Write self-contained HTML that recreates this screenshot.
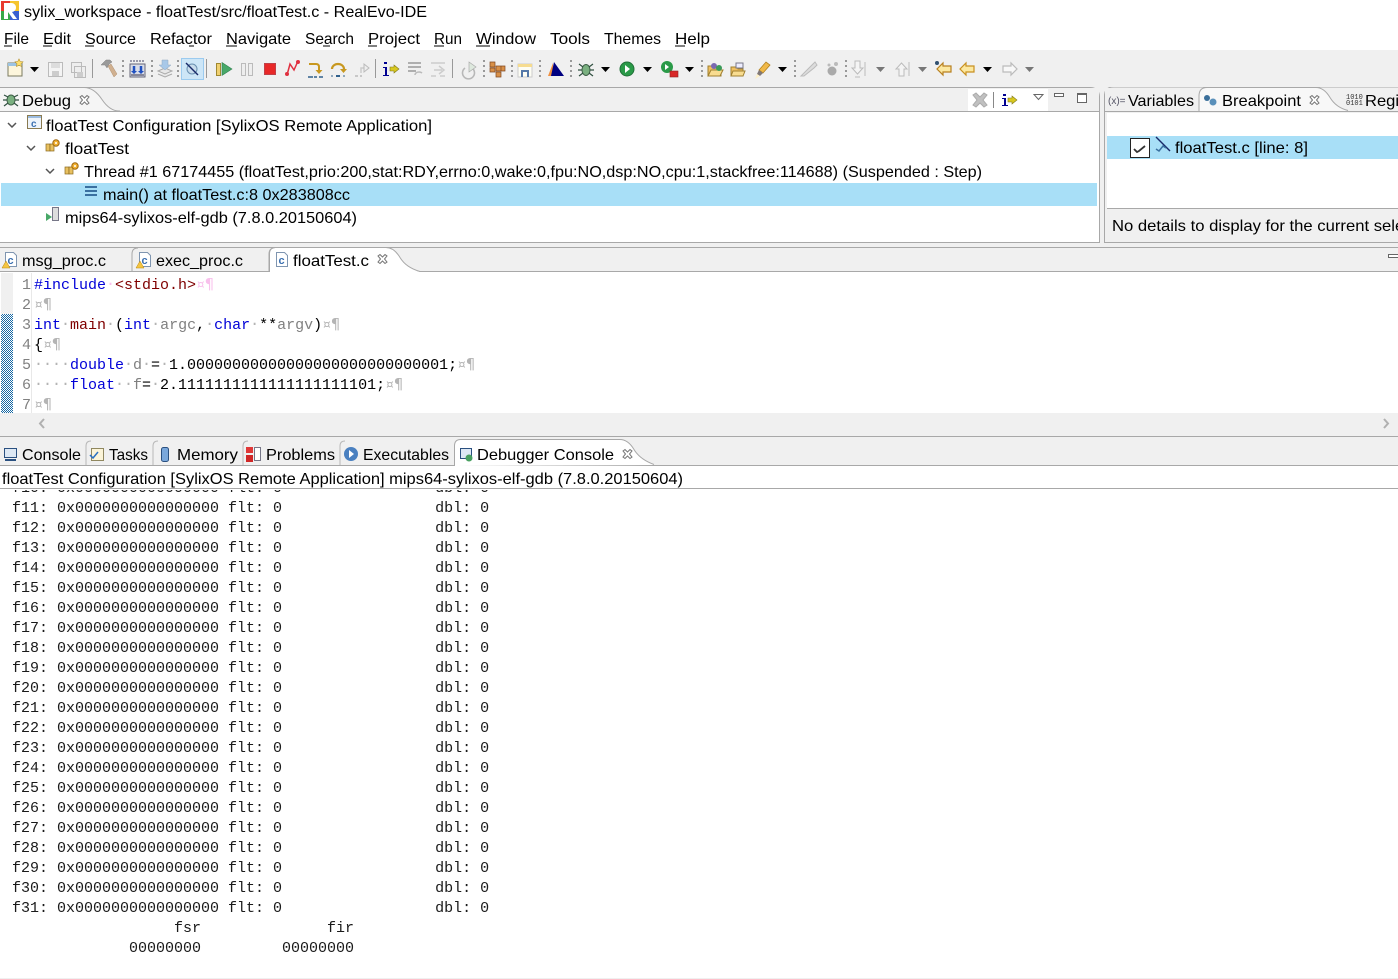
<!DOCTYPE html>
<html lang="en"><head><meta charset="utf-8"><title>sylix_workspace - floatTest/src/floatTest.c - RealEvo-IDE</title>
<style>
html,body{margin:0;padding:0;background:#fff;width:1398px;height:979px;overflow:hidden}
svg{display:block}
text{font-family:"Liberation Sans",sans-serif;font-size:16px;fill:#000;white-space:pre}
.m,.m tspan{font-family:"Liberation Mono",monospace;font-size:15px}
.m tspan.g,.m tspan.p{font-family:"DejaVu Sans Mono","Liberation Mono",monospace;font-size:14.950px}
.g{fill:#b4b4b4}.b{fill:#0000d8}.r{fill:#7f0000}.k{fill:#000}.y{fill:#808080}.p{fill:#f8c0ec}
.d{fill:#1a1a1a}
</style></head><body>
<svg xmlns="http://www.w3.org/2000/svg" width="1398" height="979" viewBox="0 0 1398 979">
<defs>
<clipPath id="cons"><rect x="0" y="490" width="1398" height="488"/></clipPath>
<clipPath id="rp"><rect x="1104" y="87" width="294" height="160"/></clipPath>
<pattern id="dots" width="2" height="2" patternUnits="userSpaceOnUse"><rect width="2" height="2" fill="#fff"/><rect width="1" height="1" fill="#1668a4"/><rect x="1" y="1" width="1" height="1" fill="#1668a4"/></pattern>
<g id="grip"><rect x="0" y="0" width="2" height="2" fill="#999"/><rect x="0" y="5" width="2" height="2" fill="#999"/><rect x="0" y="10" width="2" height="2" fill="#999"/><rect x="0" y="15" width="2" height="2" fill="#999"/></g>
<path id="dd" d="M0 0h9l-4.500 5z" fill="#000"/>
<path id="ddg" d="M0 0h9l-4.500 5z" fill="#777"/>
<path id="chev" d="M0 0l4 4 4-4" fill="none" stroke="#555" stroke-width="1.500"/>
<path id="x" d="M1 2l2-1.500 2.500 2.500 2.500-2.500 2 1.500-2.500 3 2.500 3-2 1.500-2.500-2.500-2.500 2.500-2-1.500 2.500-3z" fill="#fff" stroke="#777"/>
<g id="cfile"><path d="M1.500 .5h8l3 3v11h-11z" fill="#fff" stroke="#7f95b0"/><text x="3.500" y="12" style="font-size:11px;font-weight:bold;fill:#3a6fb0">c</text></g>
<g id="warn"><path d="M0 15l4-7 4 7z" fill="#f5c542" stroke="#b8860b" stroke-width=".5"/></g>
<g id="gear"><rect x="0" y="5" width="4" height="7" fill="#e8c060" stroke="#8a6a20" stroke-width=".7"/><rect x="4" y="5" width="4" height="7" fill="#e8c060" stroke="#8a6a20" stroke-width=".7"/><circle cx="10" cy="4" r="3.200" fill="#f0b030" stroke="#a06810"/><circle cx="10" cy="4" r="1" fill="#fff"/></g>
</defs>

<!-- chrome -->
<rect width="1398" height="979" fill="#fff"/>
<rect x="0" y="50" width="1398" height="397" fill="#f0f0f0"/>

<!-- title bar -->
<rect x="1" y="1" width="9" height="10" fill="#e8392e"/><rect x="10" y="1" width="9" height="10" fill="#f5c52e"/><rect x="1" y="11" width="9" height="9" fill="#38a848"/><rect x="10" y="11" width="9" height="9" fill="#3a5fd0"/>
<path d="M4 19V3h7a4.500 4.500 0 0 1 1 9l5 7h-4l-5-7v7z" fill="#fff"/>
<text x="24" y="17" textLength="403" lengthAdjust="spacingAndGlyphs">sylix_workspace - floatTest/src/floatTest.c - RealEvo-IDE</text>

<!-- menu -->
<g>
<text x="4" y="44" textLength="25" lengthAdjust="spacingAndGlyphs">File</text>
<text x="43" y="44" textLength="28" lengthAdjust="spacingAndGlyphs">Edit</text>
<text x="85" y="44" textLength="51" lengthAdjust="spacingAndGlyphs">Source</text>
<text x="150" y="44" textLength="62" lengthAdjust="spacingAndGlyphs">Refactor</text>
<text x="226" y="44" textLength="65" lengthAdjust="spacingAndGlyphs">Navigate</text>
<text x="305" y="44" textLength="49" lengthAdjust="spacingAndGlyphs">Search</text>
<text x="368" y="44" textLength="52" lengthAdjust="spacingAndGlyphs">Project</text>
<text x="434" y="44" textLength="28" lengthAdjust="spacingAndGlyphs">Run</text>
<text x="476" y="44" textLength="60" lengthAdjust="spacingAndGlyphs">Window</text>
<text x="550" y="44" textLength="40" lengthAdjust="spacingAndGlyphs">Tools</text>
<text x="604" y="44" textLength="57" lengthAdjust="spacingAndGlyphs">Themes</text>
<text x="675" y="44" textLength="35" lengthAdjust="spacingAndGlyphs">Help</text>
<path d="M4 46h8M43 46h9M85 46h9M189 46h5M226 46h11M323 46h7M368 46h9M434 46h10M476 46h14M675 46h10" stroke="#000" stroke-width="1"/>
</g>

<!-- toolbar -->
<g>
<rect x="8" y="63" width="14" height="13" fill="#fdf6dc" stroke="#7a7a60"/><rect x="8" y="63" width="14" height="3" fill="#9cc4e4"/><path d="M19 59l1.200 2.500 2.800.3-2 2 .5 2.700-2.500-1.300-2.500 1.300.5-2.700-2-2 2.800-.3z" fill="#fde070" stroke="#b89020" stroke-width=".6"/>
<use href="#dd" x="30" y="67"/>
<path d="M48.500 62.500h14v14h-14z" fill="#f4f4f4" stroke="#bbb"/><rect x="51" y="63" width="9" height="5" fill="#ddd"/><rect x="52" y="71" width="7" height="5" fill="#ccc"/>
<path d="M71.500 62.500h10v10h-10zM74.500 66.500h11v11h-11z" fill="#eee" stroke="#bbb"/><rect x="77" y="72" width="6" height="5" fill="#ccc"/>
<rect x="92" y="59" width="1" height="19" fill="#999"/>
<path d="M101 65l5-5h4l2 2-3 2-2 4-2-3z" fill="#9a9a9a" stroke="#808080" stroke-width=".5"/><path d="M108 66l3-2 6 10-3 3z" fill="#d0b090" stroke="#b09070" stroke-width=".5"/>
<use href="#grip" x="122" y="60"/>
<rect x="130" y="64" width="15" height="13" fill="#d8dce8" stroke="#667"/><path d="M130 61h15" stroke="#99a" stroke-dasharray="2 1" stroke-width="2"/><path d="M134 66v5M141 66v5" stroke="#2050c0" stroke-width="2.500"/><path d="M131 71h6l-3 3zM138 71h6l-3 3z" fill="#2050c0"/><rect x="131" y="74" width="13" height="2" fill="#889"/>
<use href="#grip" x="151" y="60"/>
<path d="M158 71l7-3 7 3-7 3zM158 74l7 3 7-3" fill="#e8e8e8" stroke="#aaa"/><path d="M162 60h6v5h3l-6 5-6-5h3z" fill="#a8c8e8" stroke="#90a8c0" stroke-width=".5"/>
<use href="#grip" x="177" y="60"/>
<rect x="181.500" y="58.500" width="22" height="21" fill="#cde6f7" stroke="#9ccbef"/>
<ellipse cx="192" cy="69" rx="5" ry="5" fill="#c8dcec" stroke="#6a90b0"/><path d="M186 63l12 12" stroke="#182868" stroke-width="1.400"/>
<rect x="206" y="59" width="1" height="19" fill="#999"/>
<rect x="216.500" y="63.500" width="4" height="12" fill="#f0d070" stroke="#a08830"/><path d="M222 62.500l10 6.500-10 6.500z" fill="#48a868" stroke="#308050" stroke-width=".6"/>
<rect x="241.500" y="63.500" width="4" height="12" fill="#eee" stroke="#bbb"/><rect x="248.500" y="63.500" width="4" height="12" fill="#eee" stroke="#bbb"/>
<rect x="264.500" y="63.500" width="11" height="11" fill="#e82828" stroke="#c04048"/>
<path d="M287 75l3-11 4 6 4-9" fill="none" stroke="#e03040" stroke-width="1.500"/><circle cx="287" cy="74" r="2" fill="#e03040"/><circle cx="298" cy="62" r="2" fill="#e03040"/>
<path d="M309 64h7q3 0 3 3v3" fill="none" stroke="#c89820" stroke-width="2"/><path d="M315.500 70h7l-3.500 4z" fill="#c89820"/><path d="M308 77h5M314 77h3M319 77h4" stroke="#30608c" stroke-width="1.500"/>
<path d="M332 69a6 5 0 0 1 12 0" fill="none" stroke="#c89820" stroke-width="2.200"/><path d="M340 69h7l-3.500 4z" fill="#c89820"/><path d="M336 76h4" stroke="#30608c" stroke-width="2"/><path d="M331 76h2M343 76h2" stroke="#30608c" stroke-width="1"/>
<path d="M361 73v-5h4" fill="none" stroke="#ccc" stroke-width="1.500"/><path d="M364 64l5 4-5 4z" fill="#eee" stroke="#bbb"/><path d="M355 76h3M360 76h2" stroke="#bbb" stroke-width="1.500"/>
<rect x="375" y="59" width="1" height="19" fill="#999"/>
<path d="M384 62h3v2h-3zM383 67h4v8h2v1h-6v-1h2v-7h-2z" fill="#000090"/><path d="M390 67h4v-2l5 4-5 4v-2h-4z" fill="#d8c820" stroke="#807818" stroke-width=".6"/>
<path d="M408 63h13M408 67h13M408 71h8" stroke="#999" stroke-width="1.600"/><path d="M415 75a4 3 0 0 1 7-2" fill="none" stroke="#bbb" stroke-width="1.500"/>
<path d="M431 63h14M431 76h5M440 76h5" stroke="#ccc" stroke-width="1.500"/><path d="M434 70h8m-3-4l5 4-5 4" fill="none" stroke="#ccc" stroke-width="1.500"/>
<rect x="452" y="59" width="1" height="19" fill="#999"/>
<path d="M465 68a6 6 0 1 0 7 0" fill="none" stroke="#b8b8b8" stroke-width="1.600"/><path d="M469 62l7 5-7 5z" fill="#dde8dd" stroke="#aaa" stroke-width=".7"/>
<use href="#grip" x="483" y="60"/>
<path d="M490 62h5v5h-5zM496 66h5v5h-5zM496 72h5v5h-5zM501 66h4v5h-4zM490 68h5v4h-5z" fill="#d89048" stroke="#804820" stroke-width=".7"/>
<use href="#grip" x="511" y="60"/>
<rect x="518" y="64" width="14" height="13" fill="#fdfdf4" stroke="#ccc"/><rect x="518" y="64" width="14" height="3" fill="#f6dc90"/><path d="M522 77v-6h6v6" fill="none" stroke="#5578a8" stroke-width="2"/>
<use href="#grip" x="539" y="60"/>
<path d="M548 76l5-13v13z" fill="#f09040"/><path d="M554 62l-3 14h13z" fill="#000080"/>
<use href="#grip" x="570" y="60"/>
<ellipse cx="586" cy="70" rx="4" ry="5.500" fill="#7ab080" stroke="#406048"/><path d="M579 64l4 3M593 64l-4 3M578 70h4M594 70h-4M579 76l4-3M593 76l-4-3" stroke="#305040" stroke-width="1.200"/>
<use href="#dd" x="601" y="67"/>
<circle cx="627" cy="69" r="7" fill="#2a9a48" stroke="#207038"/><path d="M625 65l5 4-5 4z" fill="#fff"/>
<use href="#dd" x="643" y="67"/>
<circle cx="667" cy="67" r="6" fill="#2a9a48"/><path d="M665 64l4 3-4 3z" fill="#fff"/><rect x="670" y="71" width="8" height="6" fill="#d82828" stroke="#902020" stroke-width=".6"/>
<use href="#dd" x="685" y="67"/>
<use href="#grip" x="701" y="60"/>
<path d="M708 66h6l1 2h6v8h-13z" fill="#f0c060" stroke="#a08030"/><path d="M708 76l3-6h12l-3 6z" fill="#f8dc90" stroke="#a08030"/><circle cx="714" cy="66" r="3" fill="#7a68b0"/><circle cx="719" cy="68" r="3" fill="#3a9a58"/>
<path d="M731 67h6l1 2h5v7h-12z" fill="#f0c060" stroke="#a08030"/><path d="M731 76l2-5h12l-2 5z" fill="#f8dc90" stroke="#a08030"/><rect x="736" y="63" width="7" height="5" fill="#eef" stroke="#778"/>
<path d="M759 70l7-8 4 3-7 8z" fill="#f0b848" stroke="#b08020" stroke-width=".8"/><path d="M759 70l4 3-3 3-3-2z" fill="#807878"/><path d="M757 74l3 2-5 3z" fill="#fdf0c8"/>
<use href="#dd" x="778" y="67"/>
<use href="#grip" x="794" y="60"/>
<path d="M801 76l11-11 3-3 2 3-3 3-10 8z" fill="#ddd" stroke="#bbb"/>
<circle cx="832" cy="71" r="4.500" fill="#aaa"/><circle cx="836" cy="64" r="2" fill="#bbb"/><circle cx="829" cy="65" r="1.500" fill="#bbb"/>
<use href="#grip" x="845" y="60"/>
<path d="M855 61h5v7h3l-5.500 6-5.500-6h3zM865 62v14" fill="#f4f4f4" stroke="#bbb"/><path d="M855 77h5" stroke="#bbb"/>
<use href="#ddg" x="876" y="67"/>
<path d="M899 76h5v-7h3l-5.500-6-5.500 6h3zM909 62v14" fill="#f4f4f4" stroke="#bbb"/>
<use href="#ddg" x="918" y="67"/>
<path d="M951 66h-8v-3l-6 6 6 6v-3h8z" fill="#fce8a0" stroke="#b88020" stroke-width="1.200"/><circle cx="937" cy="63" r="2" fill="#305070"/>
<path d="M974 66h-8v-3l-6 6 6 6v-3h8z" fill="#fce8a0" stroke="#c89020" stroke-width="1.200"/>
<use href="#dd" x="983" y="67"/>
<path d="M1003 66h8v-3l6 6-6 6v-3h-8z" fill="#f8f8f8" stroke="#bbb" stroke-width="1.200"/>
<use href="#ddg" x="1025" y="67"/>
</g>

<!-- Debug panel -->
<path d="M0 87.500H1090q9 0 9.500 9V242.500H0" fill="none" stroke="#a8a8a8"/>
<rect x="0" y="88" width="1099" height="23" fill="#f0f0f0"/>
<path d="M0 88H84q10 0 18 12t18 11H0z" fill="#f5f5f5"/><path d="M0 87.500H84q10 0 18 12t18 11.500" fill="none" stroke="#a8a8a8"/>
<rect x="0" y="111" width="1099" height="1" fill="#a8a8a8"/>
<rect x="0" y="112" width="1099" height="130" fill="#fff"/>
<rect x="968" y="89" width="80" height="22" fill="#fff"/>
<ellipse cx="11" cy="100" rx="4" ry="5" fill="#7ab080" stroke="#406048"/><path d="M4 95l4 2M18 95l-4 2M3 100h4M19 100h-4M4 106l4-3M18 106l-4-3" stroke="#305040" stroke-width="1.200"/>
<text x="22" y="106" textLength="49" lengthAdjust="spacingAndGlyphs">Debug</text>
<use href="#x" x="79" y="95"/>
<path d="M973 95l3-2 4 4 4-4 3 2-4 5 4 5-3 2-4-4-4 4-3-2 4-5z" fill="#c0c0c0" stroke="#aaa"/>
<rect x="993" y="92" width="1" height="16" fill="#888"/>
<path d="M1003 94h3v2h-3zM1002 98h4v7h2v1h-6v-1h2v-6h-2z" fill="#000090"/><path d="M1008 98h4v-2l5 4-5 4v-2h-4z" fill="#d8c820" stroke="#807818" stroke-width=".6"/>
<path d="M1034 94.500h9l-4.500 5z" fill="#fff" stroke="#666"/>
<rect x="1054.500" y="93.500" width="9" height="3" fill="#fff" stroke="#666"/>
<rect x="1077.500" y="93.500" width="9" height="9" fill="#fff" stroke="#666"/><rect x="1077" y="93" width="10" height="2" fill="#666"/>

<!-- tree -->
<rect x="1" y="183" width="1096" height="23" fill="#a8dff7"/>
<use href="#chev" x="8" y="123"/>
<use href="#chev" x="27" y="146"/>
<use href="#chev" x="46" y="169"/>
<rect x="27.500" y="115.500" width="14" height="13" fill="#eef4fb" stroke="#8a7a50"/><rect x="28" y="116" width="13" height="2" fill="#9cbce0"/><text x="31" y="127" style="font-size:10px;font-weight:bold;fill:#3a6fb0">c</text>
<text x="46" y="131" textLength="386" lengthAdjust="spacingAndGlyphs">floatTest Configuration [SylixOS Remote Application]</text>
<use href="#gear" x="46" y="139"/>
<text x="65" y="154" textLength="64" lengthAdjust="spacingAndGlyphs">floatTest</text>
<use href="#gear" x="65" y="162"/>
<text x="84" y="177" textLength="898" lengthAdjust="spacingAndGlyphs">Thread #1 67174455 (floatTest,prio:200,stat:RDY,errno:0,wake:0,fpu:NO,dsp:NO,cpu:1,stackfree:114688) (Suspended : Step)</text>
<path d="M85 186h12v2H85zM85 190h12v2H85zM85 194h12v2H85z" fill="#3a70a0"/>
<text x="103" y="200" textLength="247" lengthAdjust="spacingAndGlyphs">main() at floatTest.c:8 0x283808cc</text>
<rect x="52.500" y="207.500" width="6" height="13" fill="#ddd" stroke="#778"/><path d="M46 213l6 4-6 4z" fill="#48a868"/>
<text x="65" y="223" textLength="292" lengthAdjust="spacingAndGlyphs">mips64-sylixos-elf-gdb (7.8.0.20150604)</text>

<!-- Right panel -->
<g clip-path="url(#rp)">
<path d="M1104.500 242.500V96q0-9 9-9H1400" fill="#f0f0f0" stroke="#a8a8a8"/>
<rect x="1105" y="88" width="293" height="23" fill="#f0f0f0"/>
<rect x="1104" y="111" width="294" height="1" fill="#a8a8a8"/>
<path d="M1199 111V96q0-8 8-8H1316q8 0 14 10t18 13z" fill="#f8f8f8"/>
<path d="M1199 111V96q0-8.500 8-8.500H1316q8 0 14 10t18 13" fill="none" stroke="#a8a8a8"/>
<rect x="1105" y="113" width="2" height="129" fill="#f0f0f0"/>
<rect x="1107" y="113" width="291" height="95" fill="#fff"/>
<rect x="1107" y="136" width="291" height="23" fill="#a8dff7"/>
<rect x="1130.500" y="138.500" width="19" height="19" fill="#fff" stroke="#222"/>
<path d="M1134 149l3 3 2-1 6-5" fill="none" stroke="#333" stroke-width="1.800"/>
<path d="M1156 137l14 14" stroke="#182868" stroke-width="1.400"/><path d="M1156 149l3 2 4-5 3 2" fill="none" stroke="#3a70a0" stroke-width="1.500"/>
<text x="1175" y="153" textLength="133" lengthAdjust="spacingAndGlyphs">floatTest.c [line: 8]</text>
<rect x="1107" y="208" width="291" height="1" fill="#a8a8a8"/>
<rect x="1107" y="209" width="291" height="32" fill="#f0f0f0"/>
<text x="1112" y="231" textLength="332" lengthAdjust="spacingAndGlyphs">No details to display for the current selection.</text>
<text x="1108" y="104" style="font-size:10px;fill:#556">(x)=</text>
<text x="1128" y="106" textLength="66" lengthAdjust="spacingAndGlyphs">Variables</text>
<circle cx="1207" cy="98" r="3" fill="#3a6f9a"/><circle cx="1213" cy="102" r="3.500" fill="#5a90ba"/>
<text x="1222" y="106" textLength="79" lengthAdjust="spacingAndGlyphs">Breakpoint</text>
<use href="#x" x="1309" y="95"/>
<text x="1346" y="99" style="font-size:7px;font-family:'Liberation Mono',monospace;fill:#333">1010</text>
<text x="1346" y="105" style="font-size:7px;font-family:'Liberation Mono',monospace;fill:#333">0101</text>
<text x="1365" y="106" textLength="70" lengthAdjust="spacingAndGlyphs">Registers</text>
</g>

<!-- Editor tabs -->
<rect x="0" y="242" width="1398" height="1" fill="#a8a8a8"/>
<rect x="1100" y="242" width="4" height="1" fill="#f0f0f0"/>
<rect x="0" y="247" width="1398" height="1" fill="#a8a8a8"/>
<rect x="0" y="248" width="1398" height="24" fill="#f0f0f0"/>
<rect x="0" y="271" width="1398" height="1" fill="#a8a8a8"/>
<path d="M132 271v-17q0-6 6-6M269 271v-17q0-6 6-6" fill="none" stroke="#a8a8a8"/>
<path d="M270 272v-18q0-6 6-6H386q8 0 14 10t20 14z" fill="#fff"/>
<path d="M269.500 271v-17q0-6.500 6-6.500H386q8 0 14 10t20 14" fill="none" stroke="#a8a8a8"/>
<use href="#cfile" x="4" y="252"/><use href="#warn" x="2" y="253"/>
<text x="22" y="266" textLength="84" lengthAdjust="spacingAndGlyphs">msg_proc.c</text>
<use href="#cfile" x="138" y="252"/><use href="#warn" x="136" y="253"/>
<text x="156" y="266" textLength="87" lengthAdjust="spacingAndGlyphs">exec_proc.c</text>
<use href="#cfile" x="275" y="252"/>
<text x="293" y="266" textLength="76" lengthAdjust="spacingAndGlyphs">floatTest.c</text>
<use href="#x" x="377" y="254"/>
<rect x="1388.500" y="254.500" width="10" height="3" fill="#fff" stroke="#666"/>

<!-- Editor -->
<rect x="0" y="272" width="1398" height="141" fill="#fff"/>
<rect x="1" y="273" width="12" height="41" fill="#f0f0f0"/>
<rect x="1" y="314" width="12" height="99" fill="url(#dots)"/>
<rect x="31" y="273" width="1" height="140" fill="#e8e8e8"/>
<rect x="0" y="413" width="1398" height="21" fill="#f0f0f0"/>
<path d="M44 419l-4 4.500 4 4.500" fill="none" stroke="#b0b0b0" stroke-width="2"/>
<path d="M1384 419l4 4.500-4 4.500" fill="none" stroke="#b0b0b0" stroke-width="2"/>
<rect x="0" y="436" width="1398" height="1" fill="#a8a8a8"/>
<g class="m">
<text class="m y" x="22" y="289">1</text><text class="m y" x="22" y="309">2</text><text class="m y" x="22" y="329">3</text><text class="m y" x="22" y="349">4</text><text class="m y" x="22" y="369">5</text><text class="m y" x="22" y="389">6</text><text class="m y" x="22" y="409">7</text>
<text class="m" x="34" y="289"><tspan class="b">#include</tspan><tspan class="p">·</tspan><tspan class="r">&lt;stdio.h&gt;</tspan><tspan class="p">¤¶</tspan></text>
<text class="m" x="34" y="309"><tspan class="g">¤¶</tspan></text>
<text class="m" x="34" y="329"><tspan class="b">int</tspan><tspan class="g">·</tspan><tspan class="r">main</tspan><tspan class="g">·</tspan><tspan class="k">(</tspan><tspan class="b">int</tspan><tspan class="g">·</tspan><tspan class="y">argc</tspan><tspan class="k">,</tspan><tspan class="g">·</tspan><tspan class="b">char</tspan><tspan class="g">·</tspan><tspan class="k">**</tspan><tspan class="y">argv</tspan><tspan class="k">)</tspan><tspan class="g">¤¶</tspan></text>
<text class="m" x="34" y="349"><tspan class="k">{</tspan><tspan class="g">¤¶</tspan></text>
<text class="m" x="34" y="369"><tspan class="g">····</tspan><tspan class="b">double</tspan><tspan class="g">·</tspan><tspan class="y">d</tspan><tspan class="g">·</tspan><tspan class="k">=</tspan><tspan class="g">·</tspan><tspan class="k">1.00000000000000000000000000001;</tspan><tspan class="g">¤¶</tspan></text>
<text class="m" x="34" y="389"><tspan class="g">····</tspan><tspan class="b">float</tspan><tspan class="g">··</tspan><tspan class="y">f</tspan><tspan class="k">=</tspan><tspan class="g">·</tspan><tspan class="k">2.1111111111111111111101;</tspan><tspan class="g">¤¶</tspan></text>
<text class="m" x="34" y="409"><tspan class="g">¤¶</tspan></text>
</g>

<!-- Console tabs -->
<rect x="0" y="437" width="1398" height="29" fill="#f0f0f0"/>
<rect x="0" y="465" width="1398" height="1" fill="#a8a8a8"/>
<path d="M86 465v-19q0-5 5-5M153 465v-19q0-5 5-5M243 465v-19q0-5 5-5M340 465v-19q0-5 5-5" fill="none" stroke="#b8b8b8"/>
<path d="M455 466v-20q0-6 6-6H620q8 0 14 10t20 15z" fill="#fff"/>
<path d="M454.500 465v-19q0-6.500 6-6.500H620q8 0 14 10t20 15" fill="none" stroke="#a8a8a8"/>
<rect x="4.500" y="448.500" width="12" height="9" fill="#dde8f4" stroke="#2a5080"/><rect x="5" y="459" width="11" height="2" fill="#2a5080"/>
<text x="22" y="460" textLength="59" lengthAdjust="spacingAndGlyphs">Console</text>
<rect x="91.500" y="448.500" width="12" height="12" fill="#fbf4d8" stroke="#908860"/><path d="M90 455l3 3 5-6" fill="none" stroke="#2a70c0" stroke-width="1.500"/>
<text x="109" y="460" textLength="39" lengthAdjust="spacingAndGlyphs">Tasks</text>
<rect x="161.500" y="447.500" width="7" height="14" rx="2" fill="#7aa8dc" stroke="#2a5080"/>
<text x="177" y="460" textLength="61" lengthAdjust="spacingAndGlyphs">Memory</text>
<rect x="254.500" y="447.500" width="6" height="13" fill="#fff" stroke="#778"/><rect x="246" y="447" width="7" height="6" fill="#e03838"/><rect x="246" y="455" width="7" height="7" fill="#d02828"/>
<text x="266" y="460" textLength="69" lengthAdjust="spacingAndGlyphs">Problems</text>
<circle cx="351" cy="454" r="7" fill="#4a80c0"/><path d="M349 450l5 4-5 4z" fill="#fff"/>
<text x="363" y="460" textLength="86" lengthAdjust="spacingAndGlyphs">Executables</text>
<rect x="460.500" y="448.500" width="11" height="10" fill="#dde8f4" stroke="#2a5080"/><circle cx="469" cy="458" r="3.500" fill="#48a060"/>
<text x="477" y="460" textLength="137" lengthAdjust="spacingAndGlyphs">Debugger Console</text>
<use href="#x" x="622" y="449"/>

<!-- Console description -->
<rect x="0" y="466" width="1398" height="22" fill="#fff"/>
<text x="2" y="484" textLength="681" lengthAdjust="spacingAndGlyphs">floatTest Configuration [SylixOS Remote Application] mips64-sylixos-elf-gdb (7.8.0.20150604)</text>
<rect x="0" y="488" width="1398" height="1" fill="#a8a8a8"/>

<!-- Console output -->
<g clip-path="url(#cons)">
<text class="m d" x="12" y="492">f10: 0x0000000000000000 flt: 0                 dbl: 0</text>
<text class="m d" x="12" y="512">f11: 0x0000000000000000 flt: 0                 dbl: 0</text>
<text class="m d" x="12" y="532">f12: 0x0000000000000000 flt: 0                 dbl: 0</text>
<text class="m d" x="12" y="552">f13: 0x0000000000000000 flt: 0                 dbl: 0</text>
<text class="m d" x="12" y="572">f14: 0x0000000000000000 flt: 0                 dbl: 0</text>
<text class="m d" x="12" y="592">f15: 0x0000000000000000 flt: 0                 dbl: 0</text>
<text class="m d" x="12" y="612">f16: 0x0000000000000000 flt: 0                 dbl: 0</text>
<text class="m d" x="12" y="632">f17: 0x0000000000000000 flt: 0                 dbl: 0</text>
<text class="m d" x="12" y="652">f18: 0x0000000000000000 flt: 0                 dbl: 0</text>
<text class="m d" x="12" y="672">f19: 0x0000000000000000 flt: 0                 dbl: 0</text>
<text class="m d" x="12" y="692">f20: 0x0000000000000000 flt: 0                 dbl: 0</text>
<text class="m d" x="12" y="712">f21: 0x0000000000000000 flt: 0                 dbl: 0</text>
<text class="m d" x="12" y="732">f22: 0x0000000000000000 flt: 0                 dbl: 0</text>
<text class="m d" x="12" y="752">f23: 0x0000000000000000 flt: 0                 dbl: 0</text>
<text class="m d" x="12" y="772">f24: 0x0000000000000000 flt: 0                 dbl: 0</text>
<text class="m d" x="12" y="792">f25: 0x0000000000000000 flt: 0                 dbl: 0</text>
<text class="m d" x="12" y="812">f26: 0x0000000000000000 flt: 0                 dbl: 0</text>
<text class="m d" x="12" y="832">f27: 0x0000000000000000 flt: 0                 dbl: 0</text>
<text class="m d" x="12" y="852">f28: 0x0000000000000000 flt: 0                 dbl: 0</text>
<text class="m d" x="12" y="872">f29: 0x0000000000000000 flt: 0                 dbl: 0</text>
<text class="m d" x="12" y="892">f30: 0x0000000000000000 flt: 0                 dbl: 0</text>
<text class="m d" x="12" y="912">f31: 0x0000000000000000 flt: 0                 dbl: 0</text>
<text class="m d" x="174" y="932">fsr</text><text class="m d" x="327" y="932">fir</text>
<text class="m d" x="129" y="952">00000000</text><text class="m d" x="282" y="952">00000000</text>
</g>
<rect x="0" y="978" width="1398" height="1" fill="#f0f0f0"/>
</svg>
</body></html>
